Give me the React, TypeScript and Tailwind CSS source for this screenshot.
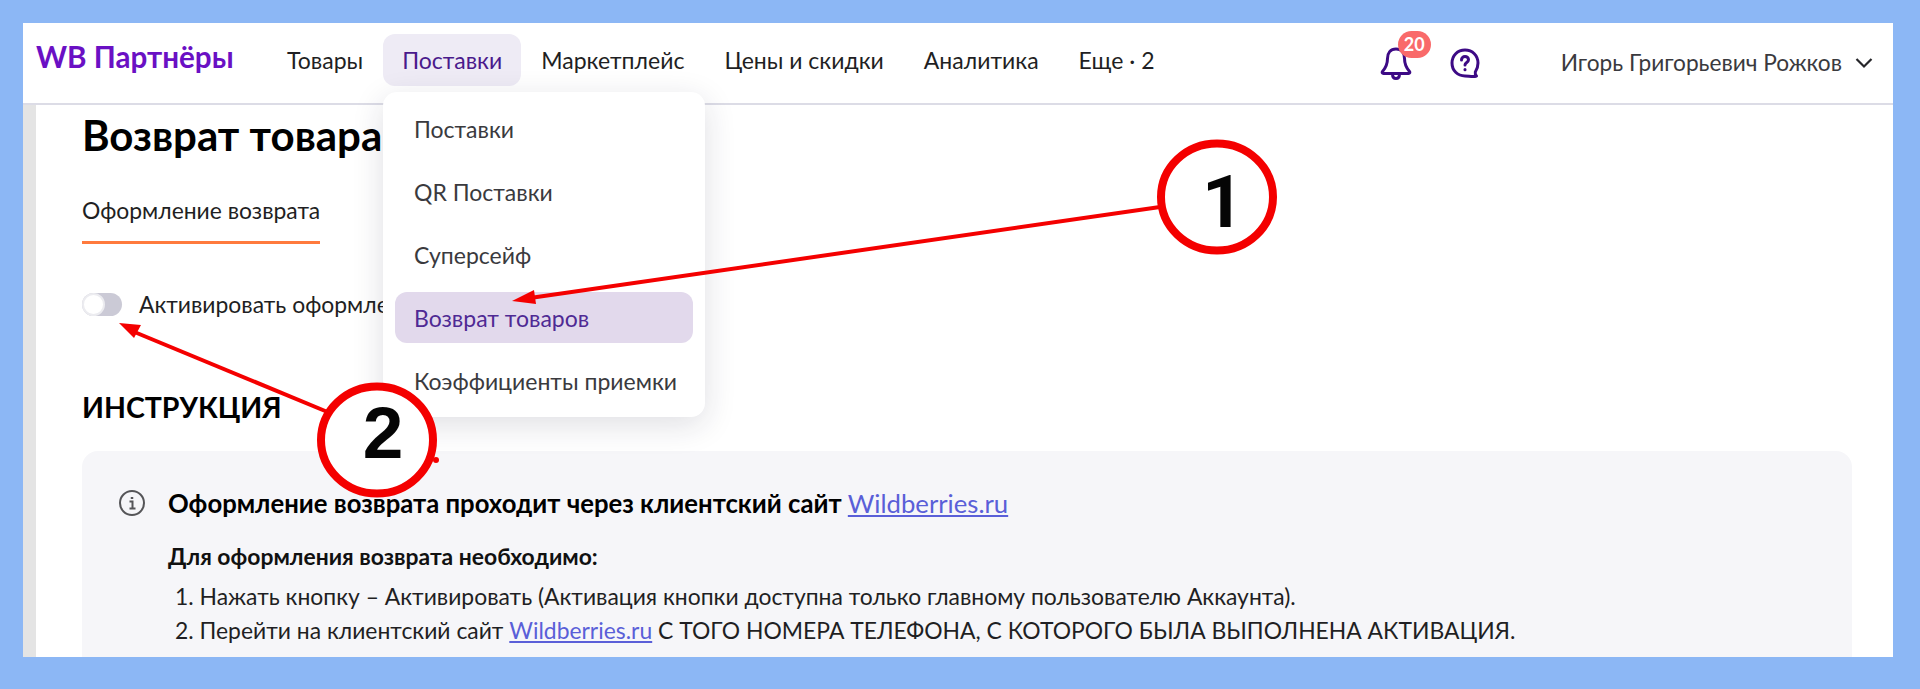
import React from "react";

const nav = [
  { t: "Товары", active: false },
  { t: "Поставки", active: true },
  { t: "Маркетплейс", active: false },
  { t: "Цены и скидки", active: false },
  { t: "Аналитика", active: false },
  { t: "Еще · 2", active: false },
];

const menu = ["Поставки", "QR Поставки", "Суперсейф", "Возврат товаров", "Коэффициенты приемки"];

function Bell() {
  return (
    <svg width="32" height="34" viewBox="0 0 32 34" fill="none" stroke="#3d0a85" strokeWidth="3" strokeLinecap="round" strokeLinejoin="round">
      <path d="M16 3c-5.500 0-8.500 4-8.500 9.500 0 6-1.500 9-5 13-.8 1-.2 2 1 2h25c1.200 0 1.800-1 1-2-3.500-4-5-7-5-13C24.500 7 21.500 3 16 3z" />
      <path d="M12.500 28c0 3 1.500 4.500 3.500 4.500s3.500-1.500 3.500-4.500" />
    </svg>
  );
}

function Help() {
  return (
    <svg width="30" height="30" viewBox="0 0 30 30" fill="none" stroke="#3d0a85" strokeWidth="3" strokeLinecap="round" strokeLinejoin="round">
      <path d="M15 2C7.500 2 2 7.500 2 15s5.500 13 13 13c3 0 5 .5 8 .5 2 0 3.500-.5 3.500-.5-1-1-1.500-2.500-1.200-4C27 21.500 28 18.500 28 15 28 7.500 22.500 2 15 2z" />
      <path d="M11.500 12c0-2 1.500-3.500 3.500-3.500s3.500 1.400 3.500 3.300c0 2.700-3.500 2.700-3.500 5.200" />
      <path d="M15 21.500v.2" />
    </svg>
  );
}

function Annotations() {
  return (
    <svg className="absolute left-0 top-0 pointer-events-none" width="1920" height="689" viewBox="0 0 1920 689" fill="none">
      <line x1="1160" y1="207" x2="530" y2="298" stroke="#f40000" strokeWidth="4" />
      <polygon points="512,301 534,290 536,304" fill="#f40000" />
      <line x1="330" y1="413" x2="132" y2="331" stroke="#f40000" strokeWidth="4" />
      <polygon points="119,323 141,325 134,338" fill="#f40000" />
      <circle cx="436" cy="460" r="3" fill="#f40000" />
      <ellipse cx="1217" cy="197" rx="56" ry="53.500" fill="#ffffff" stroke="#f40000" strokeWidth="8" />
      <ellipse cx="377" cy="440" rx="56" ry="53.500" fill="#ffffff" stroke="#f40000" strokeWidth="8" />
      <text x="1223" y="227" textAnchor="middle" fontFamily="Roboto, sans-serif" fontWeight="700" fontSize="73" fill="#050505">1</text>
      <text x="383" y="458" textAnchor="middle" fontFamily="'Liberation Sans', sans-serif" fontWeight="700" fontSize="73" fill="#050505">2</text>
    </svg>
  );
}

export default function App() {
  return (
    <div className="relative h-[689px] w-[1920px] overflow-hidden bg-[#8cb7f5] pt-[23px] pr-[27px] pb-[32px] pl-[23px] font-['Lato','Noto_Sans',sans-serif] text-[#1f1f23]">
      <div className="relative flex h-full flex-col overflow-hidden bg-white">
        <header className="flex h-[82px] shrink-0 items-center border-b-2 border-[#dcdce6] pl-[13px]">
          <div className="w-[231px] pb-[12px] text-[29.600px] font-bold leading-none text-[#6a10c4]">WB Партнёры</div>
          <nav className="flex items-center pb-[6px]">
            {nav.map((n) => (
              <div
                key={n.t}
                className={
                  n.active
                    ? "flex h-[52px] items-center rounded-[12px] bg-[#eeebf5] px-[19px] text-[23px] text-[#4a1a8c]"
                    : "flex h-[52px] items-center px-[20px] text-[23px]"
                }
              >
                {n.t}
              </div>
            ))}
          </nav>
          <div className="ml-auto flex items-center pr-[20px]">
            <div className="relative mr-[38px] flex h-[34px] w-[32px] items-center justify-center">
              <Bell />
              <span className="absolute left-[18px] top-[-15px] flex h-[27px] w-[33px] items-center justify-center rounded-full bg-[#f96a6a] text-[18px] font-bold text-white">20</span>
            </div>
            <Help />
            <span className="ml-[81px] text-[22.700px] text-[#3a3a3e]">Игорь Григорьевич Рожков</span>
            <svg className="ml-[13px]" width="18" height="12" viewBox="0 0 18 12" fill="none" stroke="#26262a" strokeWidth="2.200">
              <path d="M1.500 2l7.500 7.500L16.500 2" />
            </svg>
          </div>
        </header>
        <div className="flex min-h-0 flex-1">
          <div className="w-[13px] shrink-0 bg-[#e4e4e4]" />
          <main className="min-w-0 flex-1 pl-[46px] pr-[41px]">
            <h1 className="mt-[5px] text-[42px] font-bold leading-[50px] text-black">Возврат товара</h1>
            <div className="mt-[36px] inline-block border-b-[3px] border-[#ff7a3d] pb-[17px] text-[22.900px] leading-[28px]">Оформление возврата</div>
            <div className="mt-[47px] flex items-center gap-[17px]">
              <div className="flex h-[23px] w-[40px] items-center rounded-full bg-[#cbcad6]">
                <div className="h-[23px] w-[23px] rounded-full border-2 border-[#ececf0] bg-white" />
              </div>
              <span className="text-[22.900px] leading-[26px]">Активировать оформление возврата</span>
            </div>
            <h2 className="mt-[72px] text-[28.500px] font-bold leading-[36px] text-black">ИНСТРУКЦИЯ</h2>
            <section className="mt-[26px] h-[260px] rounded-t-[16px] bg-[#f6f6f9] pl-[36px] pt-[37px]">
              <div className="flex items-center">
                <svg width="28" height="28" viewBox="0 0 28 28" fill="none" stroke="#555558" strokeWidth="2">
                  <circle cx="14" cy="14" r="12" />
                  <path d="M11.500 12.500H14.500V19M11.500 19.500h6" strokeWidth="2" />
                  <path d="M14 8v2" strokeWidth="2.500" />
                </svg>
                <div className="ml-[22px] text-[25.700px] font-bold leading-[30px] text-black">
                  Оформление возврата проходит через клиентский сайт <span className="font-normal text-[#5a5fd8] underline">Wildberries.ru</span>
                </div>
              </div>
              <div className="ml-[50px] mt-[24px] text-[22.900px] font-bold leading-[28px] text-[#111]">Для оформления возврата необходимо:</div>
              <ol className="ml-[57px] mt-[9px] text-[22.900px] leading-[34px]">
                <li>1. Нажать кнопку – Активировать (Активация кнопки доступна только главному пользователю Аккаунта).</li>
                <li>
                  2. Перейти на клиентский сайт <span className="text-[#5a5fd8] underline">Wildberries.ru</span> С ТОГО НОМЕРА ТЕЛЕФОНА, С КОТОРОГО БЫЛА ВЫПОЛНЕНА АКТИВАЦИЯ.
                </li>
              </ol>
            </section>
          </main>
        </div>
        <div className="absolute left-[360px] top-[69px] w-[322px] rounded-[14px] bg-white px-[12px] pb-[11px] pt-[11px] shadow-[0_8px_32px_rgba(30,30,60,0.14)]">
          {menu.map((m, i) => (
            <div
              key={m}
              className={
                i === 3
                  ? "mb-[12px] flex h-[51px] items-center whitespace-nowrap rounded-[12px] bg-[#e2d9ec] px-[19px] pt-[2px] text-[23px] text-[#4f2a94]"
                  : "mb-[12px] flex h-[51px] items-center whitespace-nowrap px-[19px] pt-[2px] text-[23px] text-[#3a3a3e] last:mb-0"
              }
            >
              {m}
            </div>
          ))}
        </div>
      </div>
      <Annotations />
    </div>
  );
}
